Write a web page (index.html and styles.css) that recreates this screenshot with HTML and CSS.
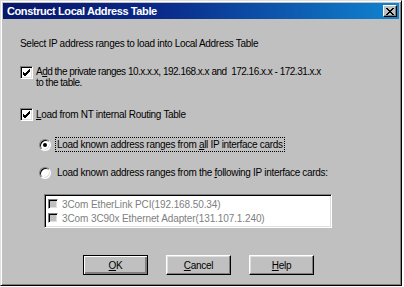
FILE: index.html
```html
<!doctype html>
<html lang="en">
<head>
    <meta charset="UTF-8">
    <title>Construct Local Address Table</title>
    <link rel="stylesheet" href="styles.css">
</head>
<body>

<div class="dialog">
    <div class="titlebar">
        <span class="title">Construct Local Address Table</span>
        <span class="close">
            <svg width="8" height="7" viewBox="0 0 8 7"><path d="M0 0L7 7M1 0L8 7M7 0L0 7M8 0L1 7" stroke="#000" stroke-width="1" fill="none"/></svg>
        </span>
    </div>

    <div class="content">
        <p class="intro">Select IP address ranges to load into Local Address Table</p>

        <div class="option option-private">
            <span class="check">
                <svg width="9" height="9" viewBox="0 0 9 9"><path d="M1 4L3 6L8 1M1 5L3 7L8 2M1 6L3 8L8 3" stroke="#000" stroke-width="1" fill="none"/></svg>
            </span>
            <span class="label">A<u>d</u>d the private ranges 10.x.x.x, 192.168.x.x and&nbsp; 172.16.x.x - 172.31.x.x<br>to the table.</span>
        </div>

        <div class="option option-routing">
            <span class="check">
                <svg width="9" height="9" viewBox="0 0 9 9"><path d="M1 4L3 6L8 1M1 5L3 7L8 2M1 6L3 8L8 3" stroke="#000" stroke-width="1" fill="none"/></svg>
            </span>
            <span class="label"><u>L</u>oad from NT internal Routing Table</span>
        </div>

        <div class="option radio-row radio-all">
            <span class="radio selected"></span>
            <span class="label focused">Load known address ranges from <u>a</u>ll IP interface cards</span>
        </div>

        <div class="option radio-row radio-some">
            <span class="radio"></span>
            <span class="label">Load known address ranges from the <u>f</u>ollowing IP interface cards:</span>
        </div>

        <div class="listbox">
            <div class="list-item">
                <span class="check disabled"></span>
                <span>3Com EtherLink PCI(192.168.50.34)</span>
            </div>
            <div class="list-item">
                <span class="check disabled"></span>
                <span>3Com 3C90x Ethernet Adapter(131.107.1.240)</span>
            </div>
        </div>

        <div class="buttons">
            <button class="btn btn-default"><u>O</u>K</button>
            <button class="btn"><u>C</u>ancel</button>
            <button class="btn"><u>H</u>elp</button>
        </div>
    </div>
</div>

</body>
</html>
```

FILE: styles.css
```css
body {
    margin: 0;
    background: #fff;
    font-family: "Liberation Sans", Arial, sans-serif;
    font-size: 10px;
    line-height: 11px;
    letter-spacing: -0.3px;
    color: #000;
}

.dialog {
    width: 402px;
    height: 286px;
    box-sizing: border-box;
    background: #c0c0c0;
    border: 1px solid;
    border-color: #dfdfdf #000 #000 #dfdfdf;
    box-shadow: inset 1px 1px #fff, inset -1px -1px #808080;
    padding: 2px;
}

.titlebar {
    height: 16px;
    display: flex;
    align-items: center;
    justify-content: space-between;
    padding: 0 2px 0 4px;
    background: linear-gradient(to right, #08176a, #0a2a8a 40%, #1084d0);
}

.title {
    color: #fff;
    font-weight: bold;
    font-size: 11px;
    letter-spacing: -0.4px;
}

.close {
    width: 14px;
    height: 12px;
    box-sizing: border-box;
    display: flex;
    align-items: center;
    justify-content: center;
    background: #c0c0c0;
    border: 1px solid;
    border-color: #fff #000 #000 #fff;
    box-shadow: inset -1px -1px #808080;
}

.content {
    padding: 19px 0 0 17px;
}

.intro {
    margin: 0;
}

.option {
    display: flex;
    align-items: flex-start;
    gap: 3px;
}

.option-private {
    margin-top: 16px;
}

.option-private .label {
    letter-spacing: -0.5px;
}

.option-routing {
    margin-top: 20px;
}

.check {
    width: 13px;
    height: 13px;
    box-sizing: border-box;
    flex-shrink: 0;
    display: flex;
    align-items: center;
    justify-content: center;
    margin-top: 1px;
    background: #fff;
    border: 1px solid;
    border-color: #808080 #fff #fff #808080;
    box-shadow: inset 1px 1px #000, inset -1px -1px #dfdfdf;
}

.option .label {
    padding-top: 1px;
}

.option-routing .check {
    margin-top: 0;
}

.radio-row {
    margin-left: 19px;
    align-items: center;
    gap: 4px;
}

.radio-all {
    margin-top: 16px;
}

.radio-some {
    margin-top: 13px;
}

.radio {
    width: 12px;
    height: 12px;
    box-sizing: border-box;
    flex-shrink: 0;
    border-radius: 50%;
    background: #fff;
    border: 1px solid;
    border-color: #808080 #fff #fff #808080;
    box-shadow: inset 1px 1px #000, inset -1px -1px #dfdfdf;
    display: flex;
    align-items: center;
    justify-content: center;
}

.radio.selected::after {
    content: "";
    width: 4px;
    height: 4px;
    border-radius: 50%;
    background: #000;
}

.radio-row .label {
    padding: 1px 1px;
    border: 1px dotted transparent;
}

.label.focused {
    border-color: #000;
}

.listbox {
    width: 288px;
    height: 34px;
    box-sizing: border-box;
    margin: 14px 0 0 24px;
    padding: 2px 2px 0;
    background: #fff;
    border: 1px solid;
    border-color: #808080 #fff #fff #808080;
    box-shadow: inset 1px 1px #000, inset -1px -1px #dfdfdf;
    color: #808080;
    letter-spacing: -0.1px;
}

.list-item {
    display: flex;
    align-items: center;
    gap: 4px;
    height: 14px;
    padding-left: 1px;
}

.check.disabled {
    width: 10px;
    height: 10px;
    margin-top: 0;
    background: #c0c0c0;
}

.buttons {
    display: flex;
    gap: 18px;
    margin: 27px 0 0 63px;
}

.btn {
    width: 65px;
    height: 20px;
    padding: 0;
    font-family: inherit;
    font-size: 10px;
    letter-spacing: inherit;
    color: #000;
    background: #c0c0c0;
    border: 1px solid;
    border-color: #fff #000 #000 #fff;
    box-shadow: inset -1px -1px #808080, inset 1px 1px #dfdfdf;
}

.btn-default {
    border: 1px solid #000;
    box-shadow: inset 1px 1px #fff, inset -2px -2px #808080;
}
```
